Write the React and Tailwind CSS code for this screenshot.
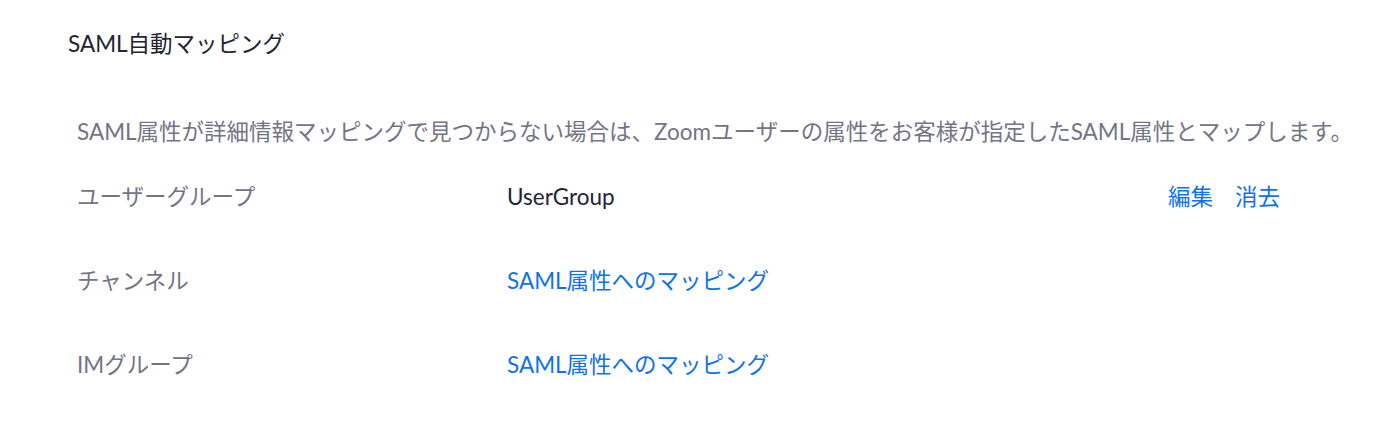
const FONT = { fontFamily: '"Lato", "Noto Sans CJK JP", sans-serif' };

const rows = [
  { label: "ユーザーグループ", value: "UserGroup", mapped: true },
  { label: "チャンネル", value: "SAML属性へのマッピング", mapped: false },
  { label: "IMグループ", value: "SAML属性へのマッピング", mapped: false },
];

export default function App() {
  return (
    <div className="w-full h-[446px] bg-white" style={FONT}>
      <h2 className="pl-[68px] pt-[29px] text-[22.5px] leading-[30px] text-[#232333] font-normal">
        SAML自動マッピング
      </h2>
      <div className="pl-[77px] pt-[58px]">
        <p className="text-[22.5px] leading-[30px] text-[#747487]">
          SAML属性が詳細情報マッピングで見つからない場合は、Zoomユーザーの属性をお客様が指定したSAML属性とマップします。
        </p>
        <div className="mt-[8px] flex flex-col">
          {rows.map((r) => (
            <div key={r.label} className="flex items-center h-[84px] text-[22.5px] leading-[30px]">
              <div className="w-[430px] text-[#747487]">{r.label}</div>
              <div className="w-[661px]">
                {r.mapped ? (
                  <span className="text-[#232333]">{r.value}</span>
                ) : (
                  <a className="text-[#0e72ed] cursor-pointer">{r.value}</a>
                )}
              </div>
              {r.mapped && (
                <div className="flex gap-[22px] text-[#0e72ed]">
                  <a className="cursor-pointer">編集</a>
                  <a className="cursor-pointer">消去</a>
                </div>
              )}
            </div>
          ))}
        </div>
      </div>
    </div>
  );
}
